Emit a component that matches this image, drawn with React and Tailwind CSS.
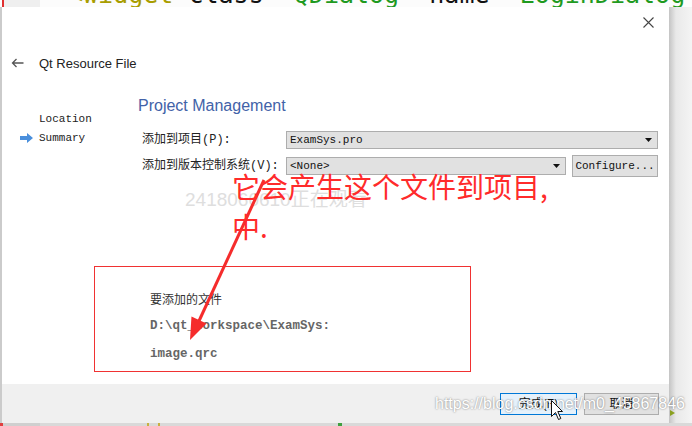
function Combo({ text, className }) {
  return (
    <div
      className={
        "flex items-center justify-between bg-[#e1e1e1] border border-[#adadad] pl-[3px] pr-[5px] text-[11px] text-[#111] font-['Liberation_Mono','Noto_Sans_CJK_SC',monospace] " +
        className
      }
    >
      <span className="leading-none">{text}</span>
      <svg width="7" height="4" viewBox="0 0 7 4">
        <path d="M0 0H7L3.5 4Z" fill="#111" />
      </svg>
    </div>
  );
}

export default function App() {
  return (
    <div className="relative w-[692px] h-[426px] overflow-hidden bg-[#f3f3f3] flex flex-col font-['Liberation_Sans','Noto_Sans_CJK_SC',sans-serif]">
      {/* code editor strip behind */}
      <div className="h-[7px] shrink-0 flex overflow-hidden bg-[#fcfcfc]">
        <div className="w-[2px] shrink-0 bg-white" />
        <div className="w-[2px] shrink-0 bg-[#e03030]" />
        <div className="w-[36px] shrink-0 bg-[#efefef]" />
        <div className="pl-[28px] mt-[-20px] leading-[30px] text-[25px] whitespace-nowrap font-['DejaVu_Sans_Mono',monospace]">
          <span className="text-[#a89d00]">&lt;widget</span>{" "}
          <span className="text-[#111]">class</span>
          <span className="text-[#888]">=</span>
          <span className="text-[#1f9a1f]">"QDialog"</span>{" "}
          <span className="text-[#111]">name</span>
          <span className="text-[#888]">=</span>
          <span className="text-[#1f9a1f]">"LoginDialog"&gt;</span>
        </div>
      </div>

      {/* dialog row */}
      <div className="flex h-[416px] shrink-0">
        <div className="w-[2px] shrink-0 bg-[#cbcbcb]" />
        <div className="w-[667px] shrink-0 flex flex-col bg-white">
          {/* close */}
          <div className="h-[40px] shrink-0 flex justify-end items-start pt-[10px] pr-[15px]">
            <svg width="11" height="11" viewBox="0 0 11 11">
              <path d="M0.5 0.5L10.5 10.5M10.5 0.5L0.5 10.5" stroke="#444" strokeWidth="1.1" />
            </svg>
          </div>
          {/* title */}
          <div className="h-[32px] shrink-0 flex items-center pl-[9px]">
            <svg width="13" height="10" viewBox="0 0 13 10">
              <path d="M12.5 5H1.5M5.5 1L1.5 5L5.5 9" stroke="#555" strokeWidth="1.3" fill="none" />
            </svg>
            <span className="ml-[15px] text-[13px] text-[#222] leading-none">Qt Resource File</span>
          </div>
          {/* body */}
          <div className="flex-1 flex">
            <div className="w-[136px] shrink-0 pt-[32px] pl-[18px] text-[11px] text-[#222] font-['Liberation_Mono',monospace]">
              <div className="h-[16px] flex items-center pl-[19px]">Location</div>
              <div className="h-[16px] mt-[3px] flex items-center gap-[6px]">
                <svg width="13" height="10" viewBox="0 0 13 10">
                  <path d="M0 3H7V0L13 5L7 10V7H0Z" fill="#4a8fdc" />
                </svg>
                <span>Summary</span>
              </div>
            </div>
            <div className="flex-1 flex flex-col pt-[17px] pr-[11px]">
              <div className="text-[16px] leading-[20px] text-[#4262a8]">Project Management</div>
              <div className="mt-[15px] h-[18px] flex items-center">
                <div className="w-[148px] shrink-0 pl-[4px] text-[12px] text-[#222] font-['Liberation_Mono','Noto_Sans_CJK_SC',monospace]">
                  添加到项目(P):
                </div>
                <Combo text="ExamSys.pro" className="flex-1 h-[18px]" />
              </div>
              <div className="mt-[6px] h-[22px] flex items-center">
                <div className="w-[148px] shrink-0 pl-[4px] text-[12px] text-[#222] font-['Liberation_Mono','Noto_Sans_CJK_SC',monospace]">
                  添加到版本控制系统(V):
                </div>
                <Combo text="<None>" className="w-[280px] h-[18px]" />
                <div className="ml-[6px] w-[86px] h-[22px] flex items-center justify-center bg-[#e1e1e1] border border-[#adadad] text-[11px] text-[#111] font-['Liberation_Mono',monospace]">
                  Configure...
                </div>
              </div>
              <div className="mt-[115px] pl-[12px] flex flex-col">
                <div className="h-[16px] flex items-center text-[12px] text-[#333]">要添加的文件</div>
                <div className="mt-[10px] h-[16px] flex items-center text-[12.5px] font-bold text-[#666] font-['Liberation_Mono',monospace]">
                  D:\qt_workspace\ExamSys:
                </div>
                <div className="mt-[12px] h-[16px] flex items-center text-[12.5px] font-bold text-[#666] font-['Liberation_Mono',monospace]">
                  image.qrc
                </div>
              </div>
            </div>
          </div>
          {/* button bar */}
          <div className="h-[39px] shrink-0 bg-[#f0f0f0] flex items-center justify-end pr-[10px] gap-[7px]">
            <div className="w-[77px] h-[22px] flex items-center justify-center bg-[#e5f1fb] border border-[#0078d7] text-[12px] text-[#111]">
              完成(F)
            </div>
            <div className="w-[75px] h-[22px] flex items-center justify-center bg-[#e1e1e1] border border-[#adadad] text-[12px] text-[#111]">
              取消
            </div>
          </div>
        </div>
        <div className="flex-1 relative bg-[linear-gradient(to_right,#c4c4c4,#e9e9e9_7px,#f4f4f4)]">
          <svg className="absolute left-[1px] top-[403px]" width="5" height="6" viewBox="0 0 5 6">
            <path d="M0 0L5 3L0 6Z" fill="#8aa020" />
          </svg>
        </div>
      </div>

      {/* bottom scroll strip */}
      <div className="h-[3px] shrink-0 flex bg-[#d9d9d9]">
        <div className="w-[3px] bg-[#e04040]" />
        <div className="w-[37px] bg-[#cfcfcf]" />
        <div className="w-[107px]" />
        <div className="w-[2px] bg-[#c8b040]" />
        <div className="w-[9px]" />
        <div className="w-[2px] bg-[#c8b040]" />
        <div className="w-[178px]" />
        <div className="w-[4px] bg-[#40a040]" />
      </div>

      {/* overlays */}
      <div className="absolute left-[185px] top-[188px] text-[19px] leading-[24px] text-[#dedede] whitespace-nowrap">
        2418060610正在观看
      </div>
      <div className="absolute left-[94px] top-[266px] w-[377px] h-[106px] border-[1.5px] border-[#f03232]" />
      <svg className="absolute left-0 top-0" width="692" height="426" viewBox="0 0 692 426">
        <line x1="264" y1="180" x2="199" y2="321" stroke="#f52c2c" strokeWidth="3" />
        <path d="M190 340L206.5 323.5L191.5 316.5Z" fill="#f52c2c" />
      </svg>
      <div className="absolute left-[232px] top-[166px] text-[28px] leading-[40px] text-[#ff2b2b] whitespace-nowrap font-['Noto_Sans_CJK_SC',sans-serif]">
        <div>它会产生这个文件到项目,</div>
        <div>中.</div>
      </div>
      <div className="absolute left-[435px] top-[394px] text-[16px] leading-[20px] text-white whitespace-nowrap [text-shadow:0_0_2px_rgba(0,0,0,0.55)]">
        https://blog.csdn.net/m0_45867846
      </div>
      <svg className="absolute left-[551px] top-[400px]" width="13" height="21" viewBox="0 0 13 21">
        <path d="M0.5 0.5V16.5L4.5 12.5L7.5 19.5L9.8 18.5L6.8 11.5H11.5Z" fill="white" stroke="#111" strokeWidth="1" strokeLinejoin="round" />
      </svg>
    </div>
  );
}
